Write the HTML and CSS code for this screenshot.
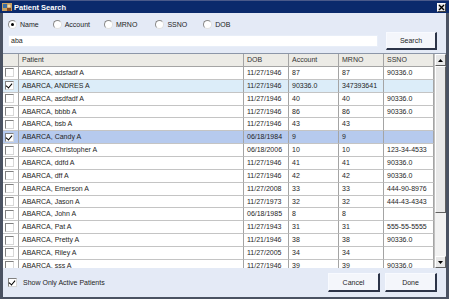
FILE: index.html
```html
<!DOCTYPE html>
<html lang="en">
<head>
    <meta charset="UTF-8">
    <title>Patient Search</title>
    <link rel="stylesheet" href="styles.css">
</head>
<body>
<div class="window">
    <div class="titlebar">
        <svg class="app-icon" width="10" height="10" viewBox="0 0 10 10">
            <rect x="0" y="1" width="10" height="8" fill="#c8a060"/>
            <rect x="1" y="2" width="4" height="4" fill="#3a6ea5"/>
            <circle cx="7" cy="4" r="1.6" fill="#f0d8b0"/>
            <rect x="5" y="6" width="4" height="3" fill="#8a4a20"/>
        </svg>
        <span class="title">Patient Search</span>
        <span class="close-btn">
            <svg width="7" height="7" viewBox="0 0 7 7"><path d="M1 1L6 6M6 1L1 6" stroke="#000" stroke-width="1.4"/></svg>
        </span>
    </div>

    <div class="panel">
        <div class="radio-group">
            <label class="radio-item"><span class="radio checked"></span>Name</label>
            <label class="radio-item"><span class="radio"></span>Account</label>
            <label class="radio-item"><span class="radio"></span>MRNO</label>
            <label class="radio-item"><span class="radio"></span>SSNO</label>
            <label class="radio-item"><span class="radio"></span>DOB</label>
        </div>

        <div class="search-row">
            <div class="search-input">aba</div>
            <button class="win-button">Search</button>
        </div>

        <div class="grid">
            <div class="grid-table" id="gridTable">
                <div class="grid-row header">
                    <div class="cell"></div>
                    <div class="cell">Patient</div>
                    <div class="cell">DOB</div>
                    <div class="cell">Account</div>
                    <div class="cell">MRNO</div>
                    <div class="cell">SSNO</div>
                </div>
            </div>
            <div class="scrollbar">
                <div class="scroll-btn"><svg width="5" height="3" viewBox="0 0 5 3"><path d="M2.5 0L5 3H0z" fill="#000"/></svg></div>
                <div class="scroll-track">
                    <div class="scroll-thumb"></div>
                </div>
                <div class="scroll-btn"><svg width="5" height="3" viewBox="0 0 5 3"><path d="M0 0H5L2.5 3z" fill="#000"/></svg></div>
            </div>
        </div>

        <div class="footer">
            <label class="check-label"><span class="checkbox checked"></span>Show Only Active Patients</label>
            <div class="footer-buttons">
                <button class="win-button">Cancel</button>
                <button class="win-button">Done</button>
            </div>
        </div>
    </div>
</div>

<script>
    const patients = [
        ['ABARCA, adsfadf A', '11/27/1946', '87', '87', '90336.0', false, ''],
        ['ABARCA, ANDRES A', '11/27/1946', '90336.0', '347393641', '', true, 'hover'],
        ['ABARCA, asdfadf A', '11/27/1946', '40', '40', '90336.0', false, ''],
        ['ABARCA, bbbb A', '11/27/1946', '86', '86', '90336.0', false, ''],
        ['ABARCA, bsb A', '11/27/1946', '43', '43', '', false, ''],
        ['ABARCA, Candy A', '06/18/1984', '9', '9', '', true, 'selected'],
        ['ABARCA, Christopher A', '06/18/2006', '10', '10', '123-34-4533', false, ''],
        ['ABARCA, ddfd A', '11/27/1946', '41', '41', '90336.0', false, ''],
        ['ABARCA, dff A', '11/27/1946', '42', '42', '90336.0', false, ''],
        ['ABARCA, Emerson A', '11/27/2008', '33', '33', '444-90-8976', false, ''],
        ['ABARCA, Jason A', '11/27/1973', '32', '32', '444-43-4343', false, ''],
        ['ABARCA, John A', '06/18/1985', '8', '8', '', false, ''],
        ['ABARCA, Pat A', '11/27/1943', '31', '31', '555-55-5555', false, ''],
        ['ABARCA, Pretty A', '11/21/1946', '38', '38', '90336.0', false, ''],
        ['ABARCA, Riley A', '11/27/2005', '34', '34', '', false, ''],
        ['ABARCA, sss A', '11/27/1946', '39', '39', '90336.0', false, '']
    ];

    const table = document.getElementById('gridTable');
    patients.forEach(p => {
        const row = document.createElement('div');
        row.className = 'grid-row' + (p[6] ? ' ' + p[6] : '');
        let html = '<div class="cell check-cell"><span class="checkbox' + (p[5] ? ' checked' : '') + '"></span></div>';
        for (let i = 0; i < 5; i++) {
            html += '<div class="cell">' + p[i] + '</div>';
        }
        row.innerHTML = html;
        table.appendChild(row);
    });
</script>
</body>
</html>
```

FILE: styles.css
```css
* {
    box-sizing: border-box;
}
body {
    margin: 0;
    font-family: "Liberation Sans", Arial, sans-serif;
    font-size: 7px;
    color: #1e1e1e;
}
.window {
    width: 449px;
    height: 299px;
    background: #4a5262;
    display: flex;
    flex-direction: column;
    padding-bottom: 2px;
}
.titlebar {
    height: 13px;
    background: #0b2a6c;
    border-top: 1px solid #4a5a8a;
    display: flex;
    align-items: center;
    padding: 0 3px 0 2px;
    color: #fff;
}
.app-icon {
    margin-right: 2px;
}
.title {
    font-weight: bold;
    font-size: 7.5px;
    flex: 1;
}
.close-btn {
    width: 9px;
    height: 9px;
    background: #e4e4e4;
    border: 1px solid #fff;
    border-right-color: #404040;
    border-bottom-color: #404040;
    display: flex;
    align-items: center;
    justify-content: center;
}
.panel {
    flex: 1;
    margin: 0 3px;
    background: #e4eaf6;
    display: flex;
    flex-direction: column;
}
.radio-group {
    display: flex;
    padding: 7px 0 0 5px;
    height: 19px;
}
.radio-item {
    display: flex;
    align-items: center;
    height: 9px;
    margin-right: 13px;
}
.radio-item:nth-child(1) { margin-right: 14px; }
.radio-item:nth-child(2) { margin-right: 14px; }
.radio-item:nth-child(3) { margin-right: 18px; }
.radio-item:nth-child(4) { margin-right: 16px; }
.radio {
    width: 9px;
    height: 9px;
    border-radius: 50%;
    background: #fff;
    border: 1px solid #8a8a8a;
    border-right-color: #e0e0e0;
    border-bottom-color: #e0e0e0;
    margin-right: 3px;
    display: flex;
    align-items: center;
    justify-content: center;
}
.radio.checked::after {
    content: "";
    width: 3px;
    height: 3px;
    border-radius: 50%;
    background: #000;
}
.search-row {
    display: flex;
    align-items: center;
    padding: 0 9px 0 5px;
    height: 18px;
}
.search-input {
    width: 370px;
    height: 12px;
    background: #fff;
    border: 1px solid #e8eef8;
    padding-left: 2px;
    line-height: 10px;
    margin-right: 8px;
}
.win-button {
    font-family: inherit;
    font-size: 7px;
    color: #1e1e1e;
    width: 51px;
    height: 18px;
    background: #f4f6fb;
    border: 1px solid #f8faff;
    border-right: 2px solid #2c3448;
    border-bottom: 2px solid #2c3448;
    padding: 0;
}
.grid {
    margin-top: 3px;
    height: 215px;
    display: flex;
    background: #fff;
    border-top: 1px solid #8c96a8;
    overflow: hidden;
}
.grid-table {
    width: 431px;
    overflow: hidden;
}
.grid-row {
    display: grid;
    grid-template-columns: 16px 225px 45px 50px 45px 50px;
    height: 12.87px;
}
.cell {
    border-right: 1px solid #a4a4a4;
    border-bottom: 1px solid #c4c4c4;
    padding-left: 3px;
    line-height: 11.5px;
    white-space: nowrap;
    overflow: hidden;
}
.grid-row.header {
    height: 13px;
    background: #ecebe6;
    color: #333;
}
.grid-row.header .cell {
    border-bottom-color: #a4a4a4;
}
.grid-row.hover {
    background: #dcedf9;
}
.grid-row.selected {
    background: #b6caee;
}
.check-cell {
    padding-left: 2px;
    display: flex;
    align-items: center;
}
.checkbox {
    width: 9px;
    height: 9px;
    background: #fff;
    border: 1px solid #808080;
    border-right-color: #d8d8d8;
    border-bottom-color: #d8d8d8;
    display: inline-block;
    position: relative;
}
.checkbox.checked::after {
    content: "";
    position: absolute;
    left: 1px;
    top: 0;
    width: 3px;
    height: 5px;
    border-right: 1.5px solid #000;
    border-bottom: 1.5px solid #000;
    transform: rotate(40deg);
}
.scrollbar {
    width: 12px;
    display: flex;
    flex-direction: column;
    background: #f2f2f2;
    border-left: 1px solid #c0c0c0;
}
.scroll-btn {
    height: 12px;
    background: #e8e8e8;
    border: 1px solid #fff;
    border-right-color: #606060;
    border-bottom-color: #606060;
    display: flex;
    align-items: center;
    justify-content: center;
}
.scroll-track {
    flex: 1;
}
.scroll-thumb {
    height: 147px;
    background: #e8e8e8;
    border: 1px solid #fff;
    border-right-color: #606060;
    border-bottom-color: #606060;
}
.footer {
    flex: 1;
    display: flex;
    align-items: center;
    padding: 0 9px 0 5px;
}
.check-label {
    display: flex;
    align-items: center;
    flex: 1;
}
.check-label .checkbox {
    margin-right: 6px;
}
.footer-buttons {
    display: flex;
    gap: 5px;
}
.footer-buttons .win-button {
    width: 52px;
    height: 19px;
}
```
